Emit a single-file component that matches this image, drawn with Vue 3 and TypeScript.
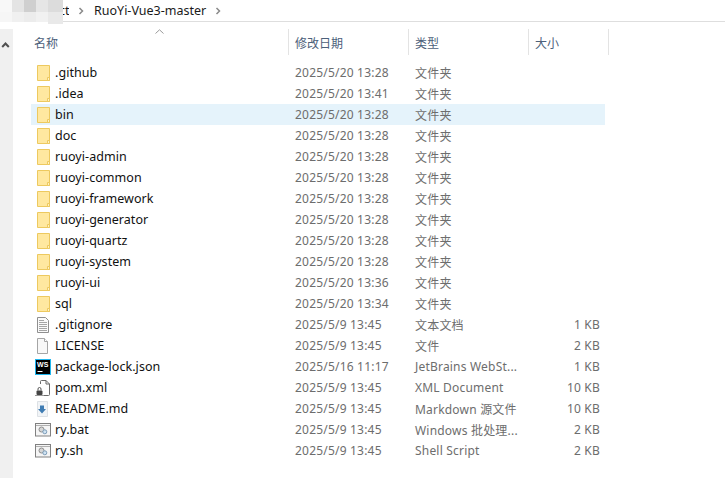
<template>
  <div class="window">
    <div class="crumbs">
      <div class="mosaic">
        <span v-for="(c, i) in mosaic" :key="i" :style="{ background: c }"></span>
      </div>
      <span class="crumb-text cut">ct</span>
      <svg class="chev" width="6" height="8" viewBox="0 0 6 8"><path d="M1.5 1 4.5 4 1.5 7" fill="none" stroke="#8a8a8a" stroke-width="1.5" /></svg>
      <span class="crumb-text">RuoYi-Vue3-master</span>
      <svg class="chev" width="6" height="8" viewBox="0 0 6 8"><path d="M1.5 1 4.5 4 1.5 7" fill="none" stroke="#8a8a8a" stroke-width="1.5" /></svg>
    </div>
    <div class="body">
      <div class="nav-scroll">
        <svg width="9" height="6" viewBox="0 0 9 6"><path d="M1.2 5 4.5 1.5 7.8 5" fill="none" stroke="#505050" stroke-width="2" /></svg>
      </div>
      <div class="list">
        <div class="head">
          <svg class="sort" width="9" height="5" viewBox="0 0 9 5"><path d="M.5 4.5 4.5 .8 8.5 4.5" fill="none" stroke="#9a9a9a" /></svg>
          <div class="col-name">名称</div>
          <div class="col-date">修改日期</div>
          <div class="col-type">类型</div>
          <div class="col-size">大小</div>
        </div>
        <div class="rows">
          <div v-for="f in files" :key="f.name" class="row" :class="{ hot: f.name === 'bin' }">
            <div class="cell-name">
              <span class="icon">
                <svg v-if="f.icon === 'folder'" width="16" height="16" viewBox="0 0 16 16">
                  <path d="M2.5 .5H14.5V15.5H2.5Z" fill="#ffe8a0" stroke="#edc95f" />
                  <path d="M12.5 15.5V12.5H14.5V15.5Z" fill="#fff2c4" stroke="#edc95f" />
                </svg>
                <svg v-else-if="f.icon === 'text'" width="16" height="16" viewBox="0 0 16 16">
                  <path d="M2.5 .5H10.5L13.5 3.5V15.5H2.5Z" fill="#fafafa" stroke="#8f8f8f" />
                  <path d="M4 3.5H9M4 5.5H12M4 7.5H12M4 9.5H12M4 11.5H12M4 13.5H12" stroke="#a5a5a5" />
                </svg>
                <svg v-else-if="f.icon === 'blank'" width="16" height="16" viewBox="0 0 16 16">
                  <path d="M2.5 .5H9.5L12.5 3.5V15.5H2.5Z" fill="#f8f8f8" stroke="#a5a5a5" />
                  <path d="M9.5 .5V3.5H12.5" fill="#fff" stroke="#a5a5a5" />
                </svg>
                <svg v-else-if="f.icon === 'ws'" width="16" height="16" viewBox="0 0 16 16">
                  <rect x=".5" y=".5" width="15" height="15" fill="#000" stroke="#1fb6ee" />
                  <text x="2" y="8" class="ws">WS</text>
                  <path d="M2.5 12.5H7.5" stroke="#fff" />
                </svg>
                <svg v-else-if="f.icon === 'xml'" width="16" height="16" viewBox="0 0 16 16">
                  <path d="M5.5 4V1.5Q5.5 .5 6.5 .5H11L14.5 4V14.5Q14.5 15.5 13.5 15.5H9" fill="#fff" stroke="#6b6b6b" />
                  <path d="M11 .5V4H14.5" fill="none" stroke="#6b6b6b" />
                  <rect x="1.5" y="10.5" width="6" height="4.5" rx="1" fill="#444" />
                  <path d="M3 10.5V9a1.5 1.5 0 0 1 3 0V10.5" fill="none" stroke="#555" />
                  <path d="M0 15.5H9" stroke="#999" />
                </svg>
                <svg v-else-if="f.icon === 'md'" width="16" height="16" viewBox="0 0 16 16">
                  <path d="M2.5 .5H12.5V15.5H2.5Z" fill="#f1f4f7" stroke="#dde1e5" />
                  <path d="M5 4.5H9V8H11L7 12.5 3 8H5Z" fill="#3f7cb3" />
                </svg>
                <svg v-else width="16" height="16" viewBox="0 0 16 16">
                  <rect x=".5" y="1.5" width="15" height="12.5" fill="#f5f5f5" stroke="#808080" />
                  <path d="M1 3.5H15" stroke="#b0b0b0" />
                  <circle cx="6.5" cy="7.5" r="2.5" fill="#d6d6d6" stroke="#8d8d8d" />
                  <circle cx="9.8" cy="9.8" r="2" fill="#cfe2f2" stroke="#7d9db8" />
                </svg>
              </span>
              <span class="fname">{{ f.name }}</span>
            </div>
            <div class="cell-date">{{ f.date }}</div>
            <div class="cell-type">{{ f.type }}</div>
            <div class="cell-size">{{ f.size }}</div>
          </div>
        </div>
      </div>
    </div>
  </div>
</template>

<script setup lang="ts">
interface FileRow {
  name: string;
  date: string;
  type: string;
  size: string;
  icon: "folder" | "text" | "blank" | "ws" | "xml" | "md" | "script";
}

const folder = (name: string, date: string): FileRow => ({
  name,
  date,
  type: "文件夹",
  size: "",
  icon: "folder",
});

const files: FileRow[] = [
  folder(".github", "2025/5/20 13:28"),
  folder(".idea", "2025/5/20 13:41"),
  folder("bin", "2025/5/20 13:28"),
  folder("doc", "2025/5/20 13:28"),
  folder("ruoyi-admin", "2025/5/20 13:28"),
  folder("ruoyi-common", "2025/5/20 13:28"),
  folder("ruoyi-framework", "2025/5/20 13:28"),
  folder("ruoyi-generator", "2025/5/20 13:28"),
  folder("ruoyi-quartz", "2025/5/20 13:28"),
  folder("ruoyi-system", "2025/5/20 13:28"),
  folder("ruoyi-ui", "2025/5/20 13:36"),
  folder("sql", "2025/5/20 13:34"),
  { name: ".gitignore", date: "2025/5/9 13:45", type: "文本文档", size: "1 KB", icon: "text" },
  { name: "LICENSE", date: "2025/5/9 13:45", type: "文件", size: "2 KB", icon: "blank" },
  { name: "package-lock.json", date: "2025/5/16 11:17", type: "JetBrains WebSt...", size: "1 KB", icon: "ws" },
  { name: "pom.xml", date: "2025/5/9 13:45", type: "XML Document", size: "10 KB", icon: "xml" },
  { name: "README.md", date: "2025/5/9 13:45", type: "Markdown 源文件", size: "10 KB", icon: "md" },
  { name: "ry.bat", date: "2025/5/9 13:45", type: "Windows 批处理...", size: "2 KB", icon: "script" },
  { name: "ry.sh", date: "2025/5/9 13:45", type: "Shell Script", size: "2 KB", icon: "script" },
];

// pixelated patch that hides the start of the path
const mosaic = [
  "#f8f8f8", "#e4e4e4", "#cfcfcf", "#e6e6e6", "#dcdcdc",
  "#f6f6f6", "#f0f0f0", "#ececec", "#f1f1f1", "#e9e9e9",
];
</script>

<style>
html,
body {
  margin: 0;
  background: #fff;
}
</style>

<style scoped>
.window {
  width: 725px;
  height: 478px;
  overflow: hidden;
  background: #fff;
  font-family: "Noto Sans", "Noto Sans CJK SC", sans-serif;
  font-size: 12px;
}
.crumbs {
  height: 21px;
  border-bottom: 1px solid #dedede;
  display: flex;
  align-items: center;
}
.mosaic {
  width: 63px;
  margin-right: -4px;
  display: grid;
  grid-template-columns: 12px 12px 12px 12px 15px;
  grid-template-rows: 12px 10px;
  align-self: flex-start;
  position: relative;
  z-index: 1;
}
.mosaic span:last-child {
  height: 12px;
}
.crumb-text {
  color: #1a1a1a;
  font-size: 12.5px;
  line-height: 21px;
}
.cut {
  width: 10px;
  overflow: hidden;
}
.chev {
  margin: 0 10px 0 9px;
}
.body {
  display: flex;
  height: 456px;
}
.nav-scroll {
  width: 13px;
  margin-top: 7px;
  background: #f0f0f0;
  padding: 6px 0 0 1px;
  box-sizing: border-box;
}
.list {
  flex: 1;
  padding-left: 18px;
}
.head {
  height: 40px;
  padding-top: 7px;
  box-sizing: border-box;
  display: flex;
  position: relative;
  color: #4c607a;
}
.sort {
  position: absolute;
  left: 124px;
  top: 7px;
}
.head > div {
  height: 26px;
  line-height: 29px;
  border-right: 1px solid #e3e3e3;
  box-sizing: border-box;
  padding-left: 3px;
}
.col-name {
  width: 258px;
}
.col-date,
.col-type,
.col-size {
  width: 120px;
  padding-left: 6px !important;
}
.col-size {
  width: 80px;
}
.rows {
  width: 574px;
}
.row {
  height: 21px;
  display: flex;
  align-items: center;
  color: #6d6d6d;
  letter-spacing: 0.2px;
}
.row.hot {
  background: #e5f3fb;
}
.cell-name {
  width: 258px;
  display: flex;
  align-items: center;
  color: #111;
  font-size: 12.5px;
  letter-spacing: 0.05px;
}
.icon {
  width: 16px;
  height: 16px;
  margin-left: 4px;
  flex: none;
}
.icon svg {
  display: block;
}
.fname {
  margin-left: 4px;
}
.ws {
  font-size: 7px;
  font-weight: 700;
  fill: #fff;
  font-family: "Liberation Sans", sans-serif;
}
.cell-date {
  width: 120px;
  padding-left: 6px;
  box-sizing: border-box;
}
.cell-type {
  width: 120px;
  padding-left: 6px;
  box-sizing: border-box;
  white-space: nowrap;
}
.cell-size {
  width: 71px;
  text-align: right;
}
</style>
